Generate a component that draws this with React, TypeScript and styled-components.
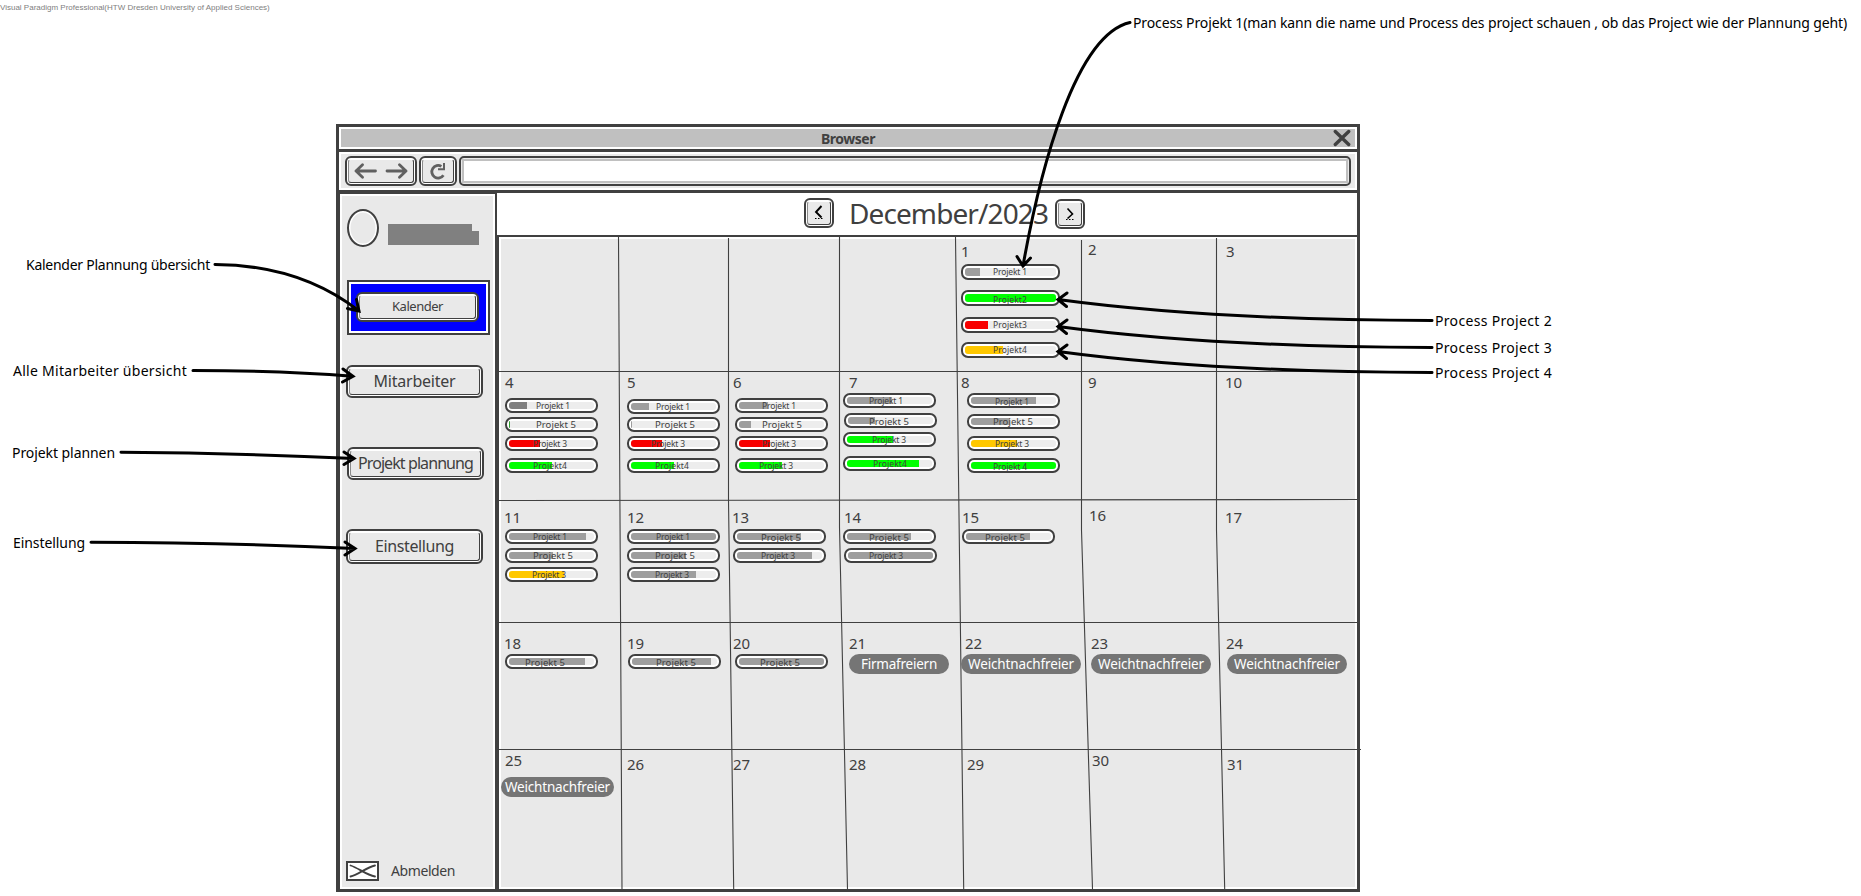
import React, { useLayoutEffect, useRef, useState } from 'react';
import styled, { createGlobalStyle } from 'styled-components';

const INK = '#404040';
const PANEL = '#e9e9e9';
const GREY = '#9e9e9e';
const DARK_GREY = '#808080';
const GREEN = '#00ff00';
const RED = '#f80000';
const AMBER = '#ffc800';

const GlobalStyle = createGlobalStyle`
  * { box-sizing: border-box; }
  body { margin: 0; background: #fff; }
`;

const Canvas = styled.div`
  position: relative;
  width: 1861px;
  height: 896px;
  overflow: hidden;
  background: #fff;
  color: ${INK};
  font-family: 'Comic Sans MS', 'Noto Sans', sans-serif;
`;

/* ---------- text set to a fixed measure ---------- */

const Line = styled.span<{ $size: number; $bold?: boolean }>`
  display: inline-block;
  white-space: pre;
  line-height: 1.36;
  font-size: ${(p) => p.$size}px;
  font-weight: ${(p) => (p.$bold ? 700 : 400)};
`;

function FitText({ text, width, size, bold }: { text: string; width: number; size: number; bold?: boolean }) {
  const ref = useRef<HTMLSpanElement>(null);
  const [spacing, setSpacing] = useState(0);
  useLayoutEffect(() => {
    const el = ref.current;
    if (!el) return;
    el.style.letterSpacing = '0px';
    const natural = el.getBoundingClientRect().width;
    setSpacing((width - natural) / text.length);
  }, [text, width, size]);
  return (
    <Line ref={ref} $size={size} $bold={bold} style={{ letterSpacing: `${spacing}px` }}>
      {text}
    </Line>
  );
}

/* ---------- browser chrome ---------- */

const Watermark = styled.div`
  height: 124px;
  padding-top: 2px;
  font: 8px/11px 'Liberation Sans', sans-serif;
  color: #808080;
  white-space: pre;
`;

const Window = styled.div`
  display: flex;
  flex-direction: column;
  width: 1024px;
  height: 768px;
  margin-left: 336px;
  border: 3px solid ${INK};
  background: #fff;
`;

const TitleBar = styled.div`
  display: grid;
  grid-template-columns: 1fr auto 1fr;
  align-items: center;
  height: 25px;
  border-bottom: 3px solid ${INK};
  background: #c0c0c0;
  box-shadow: inset 0 0 0 2px #fff;
`;

const TitleText = styled.div`
  grid-column: 2;
  display: flex;
  padding-top: 2px;
`;

const CloseIcon = styled.svg`
  justify-self: end;
  margin-right: 6px;
`;

const Toolbar = styled.div`
  display: flex;
  gap: 2px;
  height: 41px;
  padding: 4px 6px;
  border-bottom: 3px solid ${INK};
  background: ${PANEL};
  box-shadow: inset 0 0 0 2px #fff;
`;

const Button = styled.div<{ $w: number; $h: number }>`
  position: relative;
  flex: none;
  display: flex;
  align-items: center;
  justify-content: center;
  width: ${(p) => p.$w}px;
  height: ${(p) => p.$h}px;
  border: 2px solid ${INK};
  border-radius: 6px;
  background: ${PANEL};
  box-shadow: inset 0 0 0 1px #fff;

  &::after {
    content: '';
    position: absolute;
    inset: 1px;
    border: 1px solid ${INK};
    border-left-color: #8a8a8a;
    border-top-color: #fff;
    border-radius: 3px;
  }
`;

const AddressBar = styled.div`
  flex: 1;
  height: 30px;
  padding: 1px;
  border: 2px solid ${INK};
  border-radius: 5px;
`;

const AddressInput = styled.div`
  height: 100%;
  border: 2px solid #c0c0c0;
  background: #fff;
`;

const Body = styled.div`
  display: flex;
  flex: 1;
`;

/* ---------- sidebar ---------- */

const Sidebar = styled.aside`
  display: flex;
  flex-direction: column;
  flex: none;
  width: 160px;
  padding: 14px 0 8px 6px;
  border: solid ${INK};
  border-width: 1px 4px 0 1px;
  background: ${PANEL};
  box-shadow: inset 0 0 0 2px #fff;
`;

const Profile = styled.div`
  display: flex;
  align-items: flex-start;
  gap: 9px;
  height: 38px;
  margin: 1px 0 33px 1px;
`;

const Avatar = styled.div`
  width: 32px;
  height: 38px;
  border: 2px solid ${INK};
  border-radius: 50%;
  box-shadow: inset 0 0 0 1.5px #fff;
`;

const NameBlock = styled.div`
  margin-top: 15px;

  &::before, &::after {
    content: '';
    display: block;
    background: #808080;
  }
  &::before { width: 84px; height: 7px; }
  &::after { width: 91px; height: 14px; }
`;

const Selected = styled.div`
  width: 143px;
  height: 55px;
  margin-left: 1px;
  padding: 10px 0 0 7px;
  border: 2px solid ${INK};
  background: #0000ff;
  box-shadow: inset 0 0 0 2px #fff;
`;

const NavSlot = styled.div<{ $gap: number; $shift?: number }>`
  margin: ${(p) => p.$gap}px 0 0 ${(p) => p.$shift ?? 0}px;
`;

const Logout = styled.div`
  display: flex;
  align-items: center;
  gap: 12px;
  height: 20px;
  margin-top: auto;
`;

/* ---------- calendar ---------- */

const Main = styled.main`
  display: flex;
  flex-direction: column;
  flex: 1;
  min-width: 0;
`;

const MonthBar = styled.header`
  display: flex;
  align-items: flex-start;
  height: 44px;
  margin-left: -2px;
  padding: 5px 0 0 307px;
  border-bottom: 2px solid ${INK};
  background: #fff;
`;

const MonthName = styled.div`
  width: 206px;
  margin: -4px 0 0 15px;
`;

const NextSlot = styled.div`
  margin-top: 1px;
`;

const Calendar = styled.div`
  position: relative;
  display: grid;
  grid-template-columns: 121px 109px 111px 117px 125px 135px 1fr;
  grid-template-rows: 134px 129px 122px 127px 140px;
  background: ${PANEL};
  box-shadow: inset 0 0 0 2px #fff;
`;

const GridLines = styled.svg`
  position: absolute;
  left: 0;
  top: 0;
  overflow: visible;
`;

const Cell = styled.div`
  display: flex;
  flex-direction: column;
  min-width: 0;
`;

const DayNumber = styled.div<{ $x: number; $y: number }>`
  height: 16px;
  margin: ${(p) => p.$y}px 0 0 ${(p) => p.$x}px;
  font-size: 15px;
  line-height: 16px;
`;

const Bar = styled.div<{ $x: number; $gap: number; $big?: boolean }>`
  position: relative;
  flex: none;
  width: ${(p) => (p.$big ? 99 : 93)}px;
  height: ${(p) => (p.$big ? 16 : 15)}px;
  margin: ${(p) => p.$gap}px 0 0 ${(p) => p.$x}px;
  padding: 2px;
  border: 2px solid ${INK};
  border-radius: 7px;
  background: #ededed;
  box-shadow: inset 0 0 0 2px #fff;
`;

const Fill = styled.div<{ $full: boolean }>`
  height: 100%;
  border-radius: ${(p) => (p.$full ? '3px' : '3px 0 0 3px')};
`;

const BarLabel = styled.div<{ $x: number; $y: number }>`
  position: absolute;
  left: ${(p) => p.$x - 2}px;
  top: ${(p) => p.$y - 11}px;
  line-height: 0;
`;

const Holiday = styled.div<{ $x: number; $gap: number; $w: number }>`
  position: relative;
  display: flex;
  align-items: center;
  justify-content: center;
  flex: none;
  width: ${(p) => p.$w}px;
  height: 20px;
  margin: ${(p) => p.$gap}px 0 0 ${(p) => p.$x}px;
  border-radius: 10px;
  background: #757575;
  color: #fff;
`;

type BarItem = {
  label: string;
  gap: number;
  x: number;
  fill: number;
  color?: string;
  tx: number;
  base?: number;
  big?: boolean;
};
type HolidayItem = { holiday: string; x: number; w: number; tw: number; gap: number };
type Day = { n?: number; x?: number; y?: number; bars?: BarItem[]; off?: HolidayItem };

const P1 = 'Projekt 1';
const P3 = 'Projekt 3';
const P5 = 'Projekt 5';

const days: Day[] = [
  {}, {}, {}, {},
  {
    n: 1, x: 4, y: 6,
    bars: [
      { label: P1, gap: 5, x: 4, fill: 15, tx: 32, big: true },
      { label: 'Projekt2', gap: 10, x: 4, fill: 91, color: GREEN, tx: 32, base: 13, big: true },
      { label: 'Projekt3', gap: 11, x: 4, fill: 23, color: RED, tx: 32, big: true },
      { label: 'Projekt4', gap: 9, x: 4, fill: 38, color: AMBER, tx: 32, big: true },
    ],
  },
  { n: 2, x: 6, y: 4 },
  { n: 3, x: 9, y: 6 },

  {
    n: 4, x: 6, y: 3,
    bars: [
      { label: P1, gap: 8, x: 6, fill: 18, color: DARK_GREY, tx: 31 },
      { label: P5, gap: 4, x: 6, fill: 1, color: '#2f9e2f', tx: 31 },
      { label: P3, gap: 4, x: 6, fill: 31, color: RED, tx: 28 },
      { label: 'Projekt4', gap: 7, x: 6, fill: 43, color: GREEN, tx: 28 },
    ],
  },
  {
    n: 5, x: 7, y: 3,
    bars: [
      { label: P1, gap: 9, x: 7, fill: 18, tx: 29 },
      { label: P5, gap: 3, x: 7, fill: 1, tx: 28 },
      { label: P3, gap: 4, x: 7, fill: 31, color: RED, tx: 24 },
      { label: 'Projekt4', gap: 7, x: 7, fill: 43, color: GREEN, tx: 28 },
    ],
  },
  {
    n: 6, x: 4, y: 3,
    bars: [
      { label: P1, gap: 8, x: 6, fill: 29, tx: 27 },
      { label: P5, gap: 4, x: 6, fill: 12, tx: 27 },
      { label: P3, gap: 4, x: 6, fill: 31, color: RED, tx: 27 },
      { label: P3, gap: 7, x: 6, fill: 43, color: GREEN, tx: 24 },
    ],
  },
  {
    n: 7, x: 9, y: 3,
    bars: [
      { label: P1, gap: 3, x: 3, fill: 45, tx: 26 },
      { label: P5, gap: 5, x: 4, fill: 27, tx: 25, base: 12 },
      { label: P3, gap: 4, x: 3, fill: 46, color: GREEN, tx: 29 },
      { label: 'Projekt4', gap: 9, x: 3, fill: 72, color: GREEN, tx: 30 },
    ],
  },
  {
    n: 8, x: 4, y: 3,
    bars: [
      { label: P1, gap: 3, x: 10, fill: 65, tx: 28, base: 12 },
      { label: P5, gap: 6, x: 10, fill: 39, tx: 26 },
      { label: P3, gap: 7, x: 10, fill: 46, color: AMBER, tx: 28 },
      { label: 'Projekt 4', gap: 7, x: 10, fill: 85, color: GREEN, tx: 26, base: 12 },
    ],
  },
  { n: 9, x: 6, y: 3 },
  { n: 10, x: 8, y: 3 },

  {
    n: 11, x: 5, y: 9,
    bars: [
      { label: P1, gap: 4, x: 6, fill: 77, tx: 28 },
      { label: P5, gap: 4, x: 6, fill: 44, tx: 28 },
      { label: P3, gap: 4, x: 6, fill: 55, color: AMBER, tx: 27 },
    ],
  },
  {
    n: 12, x: 7, y: 9,
    bars: [
      { label: P1, gap: 4, x: 7, fill: 85, tx: 29 },
      { label: P5, gap: 4, x: 7, fill: 55, tx: 28 },
      { label: P3, gap: 4, x: 7, fill: 65, tx: 28 },
    ],
  },
  {
    n: 13, x: 3, y: 9,
    bars: [
      { label: P5, gap: 4, x: 4, fill: 64, tx: 28, base: 12 },
      { label: P3, gap: 4, x: 4, fill: 75, tx: 28 },
    ],
  },
  {
    n: 14, x: 4, y: 9,
    bars: [
      { label: P5, gap: 4, x: 3, fill: 64, tx: 26, base: 12 },
      { label: P3, gap: 4, x: 4, fill: 85, tx: 25 },
    ],
  },
  { n: 15, x: 5, y: 9, bars: [{ label: P5, gap: 4, x: 5, fill: 64, tx: 23, base: 12 }] },
  { n: 16, x: 7, y: 7 },
  { n: 17, x: 8, y: 9 },

  { n: 18, x: 5, y: 13, bars: [{ label: P5, gap: 3, x: 6, fill: 76, tx: 20, base: 12 }] },
  { n: 19, x: 7, y: 13, bars: [{ label: P5, gap: 3, x: 8, fill: 79, tx: 28, base: 12 }] },
  { n: 20, x: 4, y: 13, bars: [{ label: P5, gap: 3, x: 6, fill: 85, tx: 25, base: 12 }] },
  { n: 21, x: 9, y: 13, off: { holiday: 'Firmafreiern', gap: 3, x: 9, w: 100, tw: 76 } },
  { n: 22, x: 8, y: 13, off: { holiday: 'Weichtnachfreier', gap: 3, x: 4, w: 120, tw: 106 } },
  { n: 23, x: 9, y: 13, off: { holiday: 'Weichtnachfreier', gap: 3, x: 9, w: 120, tw: 106 } },
  { n: 24, x: 9, y: 13, off: { holiday: 'Weichtnachfreier', gap: 3, x: 10, w: 120, tw: 106 } },

  { n: 25, x: 6, y: 3, off: { holiday: 'Weichtnachfreier', gap: 9, x: 2, w: 113, tw: 105 } },
  { n: 26, x: 7, y: 7 },
  { n: 27, x: 4, y: 7 },
  { n: 28, x: 9, y: 7 },
  { n: 29, x: 10, y: 7 },
  { n: 30, x: 10, y: 3 },
  { n: 31, x: 10, y: 7 },
];

function ProgressBar({ item }: { item: BarItem }) {
  const wide = item.label === P5;
  return (
    <Bar $x={item.x} $gap={item.gap} $big={item.big}>
      <Fill $full={item.fill >= 85} style={{ width: item.fill, background: item.color ?? GREY }} />
      <BarLabel $x={item.tx} $y={item.base ?? 11}>
        <FitText text={item.label} width={wide ? 40 : 34} size={wide ? 9.5 : 8.5} />
      </BarLabel>
    </Bar>
  );
}

function DayCell({ day }: { day: Day }) {
  return (
    <Cell>
      {day.n && (
        <DayNumber $x={day.x ?? 0} $y={day.y ?? 0}>
          {day.n}
        </DayNumber>
      )}
      {day.bars?.map((b, i) => <ProgressBar key={i} item={b} />)}
      {day.off && (
        <Holiday $x={day.off.x} $gap={day.off.gap} $w={day.off.w}>
          <FitText text={day.off.holiday} width={day.off.tw} size={13.5} />
        </Holiday>
      )}
    </Cell>
  );
}

/* ---------- annotations around the window ---------- */

const Note = styled.div<{ $x: number; $base: number }>`
  position: absolute;
  left: ${(p) => p.$x}px;
  top: ${(p) => p.$base - 15}px;
  color: #000;
  line-height: 0;
`;

const Arrows = styled.svg`
  position: absolute;
  left: 0;
  top: 0;
`;

const notes = [
  { text: 'Kalender Plannung übersicht', x: 26, base: 270, w: 184 },
  { text: 'Alle Mitarbeiter übersicht', x: 13, base: 376, w: 174 },
  { text: 'Projekt plannen', x: 12, base: 458, w: 103 },
  { text: 'Einstellung', x: 13, base: 548, w: 72 },
  {
    text: 'Process Projekt 1(man kann die name und Process des project schauen , ob das Project wie der Plannung geht)',
    x: 1133, base: 28, w: 714,
  },
  { text: 'Process Project 2', x: 1435, base: 326, w: 117 },
  { text: 'Process Project 3', x: 1435, base: 353, w: 117 },
  { text: 'Process Project 4', x: 1435, base: 378, w: 117 },
];

const arrows = [
  'M215 264.5Q300 265 359 311M356.5 299.5L359 311L347.5 308.5',
  'M193 370.5Q280 370.5 353 376.3M343 369L353 376.3L342.5 382',
  'M121 452.3Q240 453 354 458.5M344 452L354 458.5L344 464.5',
  'M91 542.3Q230 542.5 355 548.5M345 542L355 548.5L345 555',
  'M1130 22.5C1075 35 1040 170 1023 266M1017 256.5L1023 266L1030.5 258',
  'M1432 320.5Q1210 320 1058 299.5M1067 293L1058 299.5L1066.5 306.5',
  'M1432 347.5Q1210 347 1058 326.5M1067 320L1058 326.5L1066.5 333.5',
  'M1432 372.5Q1210 372 1058 351.5M1067 345L1058 351.5L1066.5 358.5',
];

export default function App() {
  return (
    <Canvas>
      <GlobalStyle />
      <Watermark>Visual Paradigm Professional(HTW Dresden University of Applied Sciences)</Watermark>
      <Window>
        <TitleBar>
          <TitleText>
            <FitText text="Browser" width={54} size={14} bold />
          </TitleText>
          <CloseIcon width="18" height="18" fill="none" stroke={INK} strokeWidth="3.4" strokeLinecap="round">
            <path d="M2.3 2.5L15.7 15.5M15.7 2.5L2.3 15.5" />
          </CloseIcon>
        </TitleBar>
        <Toolbar>
          <Button $w={72} $h={30}>
            <svg width="54" height="16" fill="none" stroke="#606060" strokeWidth="2.8" strokeLinecap="round" strokeLinejoin="round">
              <path d="M8.5 1.8L2 8L8.5 14.2M2 8H21.5M45.5 1.8L52 8L45.5 14.2M52 8H33" />
            </svg>
          </Button>
          <Button $w={38} $h={30}>
            <svg width="18" height="18" fill="none" stroke="#606060" strokeWidth="2.8">
              <path d="M14.4 13.2A6.3 6.3 0 1 1 12.4 4.4" />
              <path d="M15 1V7.2H9" strokeWidth="2" />
            </svg>
          </Button>
          <AddressBar>
            <AddressInput />
          </AddressBar>
        </Toolbar>
        <Body>
          <Sidebar>
            <Profile>
              <Avatar />
              <NameBlock />
            </Profile>
            <Selected>
              <Button $w={123} $h={30}>
                <FitText text="Kalender" width={51} size={13} />
              </Button>
            </Selected>
            <NavSlot $gap={30}>
              <Button $w={137} $h={33}>
                <FitText text="Mitarbeiter" width={82} size={16} />
              </Button>
            </NavSlot>
            <NavSlot $gap={49} $shift={1}>
              <Button $w={137} $h={33}>
                <FitText text="Projekt plannung" width={115} size={16} />
              </Button>
            </NavSlot>
            <NavSlot $gap={49}>
              <Button $w={137} $h={35}>
                <FitText text="Einstellung" width={79} size={16} />
              </Button>
            </NavSlot>
            <Logout>
              <svg width="33" height="20" fill="none" stroke={INK} strokeLinecap="round">
                <rect x="1" y="1" width="31" height="18" fill="#fff" strokeWidth="2" />
                <path d="M4.5 4.5C12 6.5 20 14 29 15.5M29 4.5C20 6.5 12 14 4.5 15.5" strokeWidth="1.8" />
              </svg>
              <FitText text="Abmelden" width={64} size={14} />
            </Logout>
          </Sidebar>
          <Main>
            <MonthBar>
              <Button $w={30} $h={30}>
                <svg width="14" height="18" fill="none" stroke="#000">
                  <path d="M9.5 2L4 8L9.5 13.5" strokeWidth="1.9" />
                  <path d="M3 14.5H11" strokeWidth="1" strokeDasharray="1.5 1.5" />
                </svg>
              </Button>
              <MonthName>
                <FitText text="December/2023" width={199} size={28} />
              </MonthName>
              <NextSlot>
                <Button $w={30} $h={30}>
                  <svg width="14" height="18" fill="none" stroke="#000">
                    <path d="M4.5 3.5L9.5 9L4.5 13.5" strokeWidth="1.6" />
                    <path d="M3 14.5H11" strokeWidth="1" strokeDasharray="1.5 1.5" />
                  </svg>
                </Button>
              </NextSlot>
            </MonthBar>
            <Calendar>
              <GridLines width="858" height="652" fill="none" stroke={INK} strokeWidth="1.1">
                <path d="M0 134.5H858M0 263.5L858 262.5M0 385.5H858M0 512.5H862" />
                <path d="M119.5 0L123 652M229.5 1V263L234.7 652M340.5 0V290L348.5 652M456.5 0L464.7 652M582.5 3V293L593.5 652M717.5 1V293L725.7 652" />
              </GridLines>
              {days.map((d, i) => (
                <DayCell key={i} day={d} />
              ))}
            </Calendar>
          </Main>
        </Body>
      </Window>
      {notes.map((n) => (
        <Note key={n.text} $x={n.x} $base={n.base}>
          <FitText text={n.text} width={n.w} size={14} />
        </Note>
      ))}
      <Arrows width="1861" height="896" fill="none" stroke="#000" strokeWidth="3" strokeLinecap="round">
        {arrows.map((d) => (
          <path key={d} d={d} />
        ))}
      </Arrows>
    </Canvas>
  );
}
